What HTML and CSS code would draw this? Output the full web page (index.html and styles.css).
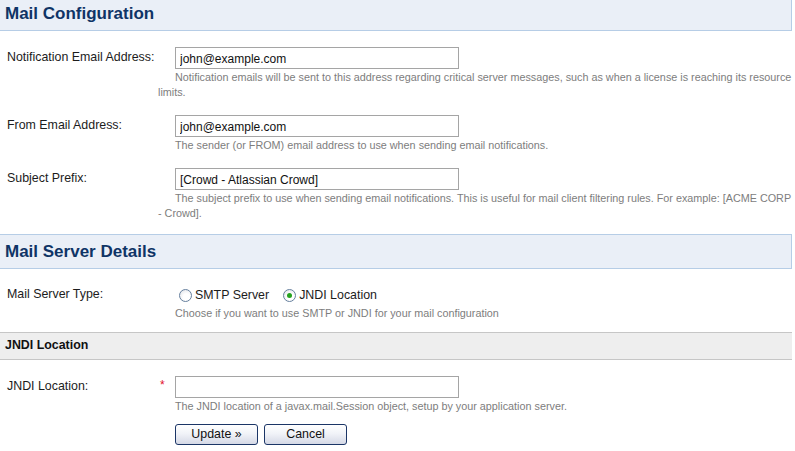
FILE: index.html
```html
<!DOCTYPE html>
<html>
<head>
<meta charset="utf-8">
<link rel="stylesheet" href="styles.css">
</head>
<body>
<div class="page">
  <h2 class="section-title first">Mail Configuration</h2>

  <div class="row first-row">
    <div class="label">Notification Email Address:</div>
    <div class="field">
      <div class="control"><span class="req"></span><input class="text" type="text" value="john@example.com"></div>
      <div class="desc">Notification emails will be sent to this address regarding critical server messages, such as when a license is reaching its resource limits.</div>
    </div>
  </div>

  <div class="row">
    <div class="label">From Email Address:</div>
    <div class="field">
      <div class="control"><span class="req"></span><input class="text" type="text" value="john@example.com"></div>
      <div class="desc">The sender (or FROM) email address to use when sending email notifications.</div>
    </div>
  </div>

  <div class="row">
    <div class="label">Subject Prefix:</div>
    <div class="field">
      <div class="control"><span class="req"></span><input class="text" type="text" value="[Crowd - Atlassian Crowd]"></div>
      <div class="desc">The subject prefix to use when sending email notifications. This is useful for mail client filtering rules. For example: [ACME CORP - Crowd].</div>
    </div>
  </div>

  <h2 class="section-title">Mail Server Details</h2>

  <div class="row first-row">
    <div class="label radio-label">Mail Server Type:</div>
    <div class="field">
      <div class="control radios"><span class="req"></span>
        <span class="radio"><span class="dot"></span><span class="rtext">SMTP Server</span></span>
        <span class="radio checked"><span class="dot"></span><span class="rtext">JNDI Location</span></span>
      </div>
      <div class="desc">Choose if you want to use SMTP or JNDI for your mail configuration</div>
    </div>
  </div>

  <h3 class="sub-title">JNDI Location</h3>

  <div class="row first-row">
    <div class="label">JNDI Location:</div>
    <div class="field">
      <div class="control"><span class="req">*</span><input class="text" type="text" value=""></div>
      <div class="desc">The JNDI location of a javax.mail.Session object, setup by your application server.</div>
      <div class="buttons">
        <button class="btn" type="button">Update &raquo;</button>
        <button class="btn" type="button">Cancel</button>
      </div>
    </div>
  </div>
</div>
</body>
</html>
```

FILE: styles.css
```css
html, body {
  margin: 0;
  padding: 0;
  background: #ffffff;
}
body {
  font-family: "Liberation Sans", Arial, sans-serif;
  color: #1c1c1c;
  font-size: 12.4px;
}
.page {
  width: 792px;
}
.section-title {
  margin: 13px 0 0 0;
  padding: 7px 5px 6px 5px;
  line-height: 20px;
  font-size: 17px;
  font-weight: bold;
  color: #0f3466;
  background: #eaeff7;
  border: 1px solid #b6cde6;
  border-left: none;
}
.section-title.first {
  margin-top: -4px;
}
.sub-title {
  margin: 11px 0 0 0;
  padding: 5px 5px 6px 5px;
  line-height: 15px;
  font-size: 12.4px;
  font-weight: bold;
  color: #111;
  background: #eeeeee;
  border-top: 1px solid #c6c6c6;
  border-bottom: 1px solid #c6c6c6;
}
.row {
  display: grid;
  grid-template-columns: 158px 1fr;
  padding-top: 15px;
}
.row.first-row {
  padding-top: 16px;
}
.label {
  padding-left: 7px;
  padding-top: 3px;
  line-height: 15px;
}
.radio-label {
  padding-top: 2px;
}
.field {
  min-width: 0;
}
.control {
  display: flex;
  align-items: center;
  height: 22px;
}
.req {
  flex: 0 0 17px;
  color: #e2102a;
  font-size: 12px;
  padding-left: 2px;
  box-sizing: border-box;
  align-self: flex-start;
  padding-top: 2px;
}
.text {
  box-sizing: border-box;
  width: 284px;
  height: 22px;
  margin: 0;
  padding: 1px 4px 0 4px;
  border: 1px solid #a5a5a5;
  font-family: "Liberation Sans", Arial, sans-serif;
  font-size: 12px;
  color: #111;
  background: #fff;
  outline: none;
}
.desc {
  margin-top: 1px;
  font-size: 10.8px;
  line-height: 15px;
  color: #7d7d7d;
  text-indent: 17px;
}
.radios {
  height: 20px;
  gap: 0;
}
.radio {
  display: inline-flex;
  align-items: center;
  margin-left: 4px;
  margin-right: 10px;
}
.dot {
  box-sizing: border-box;
  width: 13px;
  height: 13px;
  border-radius: 50%;
  border: 1px solid #66809e;
  background: radial-gradient(circle at 60% 65%, #ffffff 0, #ffffff 35%, #dcdfe4 100%);
  display: inline-flex;
  align-items: center;
  justify-content: center;
}
.checked .dot::after {
  content: "";
  width: 5px;
  height: 5px;
  border-radius: 50%;
  background: #25a21f;
}
.rtext {
  margin-left: 3px;
  font-size: 12.4px;
  color: #1c1c1c;
}
.buttons {
  display: flex;
  gap: 6px;
  margin-top: 10px;
  padding-left: 17px;
}
.btn {
  box-sizing: border-box;
  width: 83px;
  height: 21px;
  margin: 0;
  padding: 0;
  border: 1px solid #1b3566;
  border-radius: 3px;
  background: linear-gradient(#ffffff 0%, #f1f3f8 45%, #d5d9e6 100%);
  font-family: "Liberation Sans", Arial, sans-serif;
  font-size: 12.4px;
  color: #111;
  line-height: 17px;
}
```
